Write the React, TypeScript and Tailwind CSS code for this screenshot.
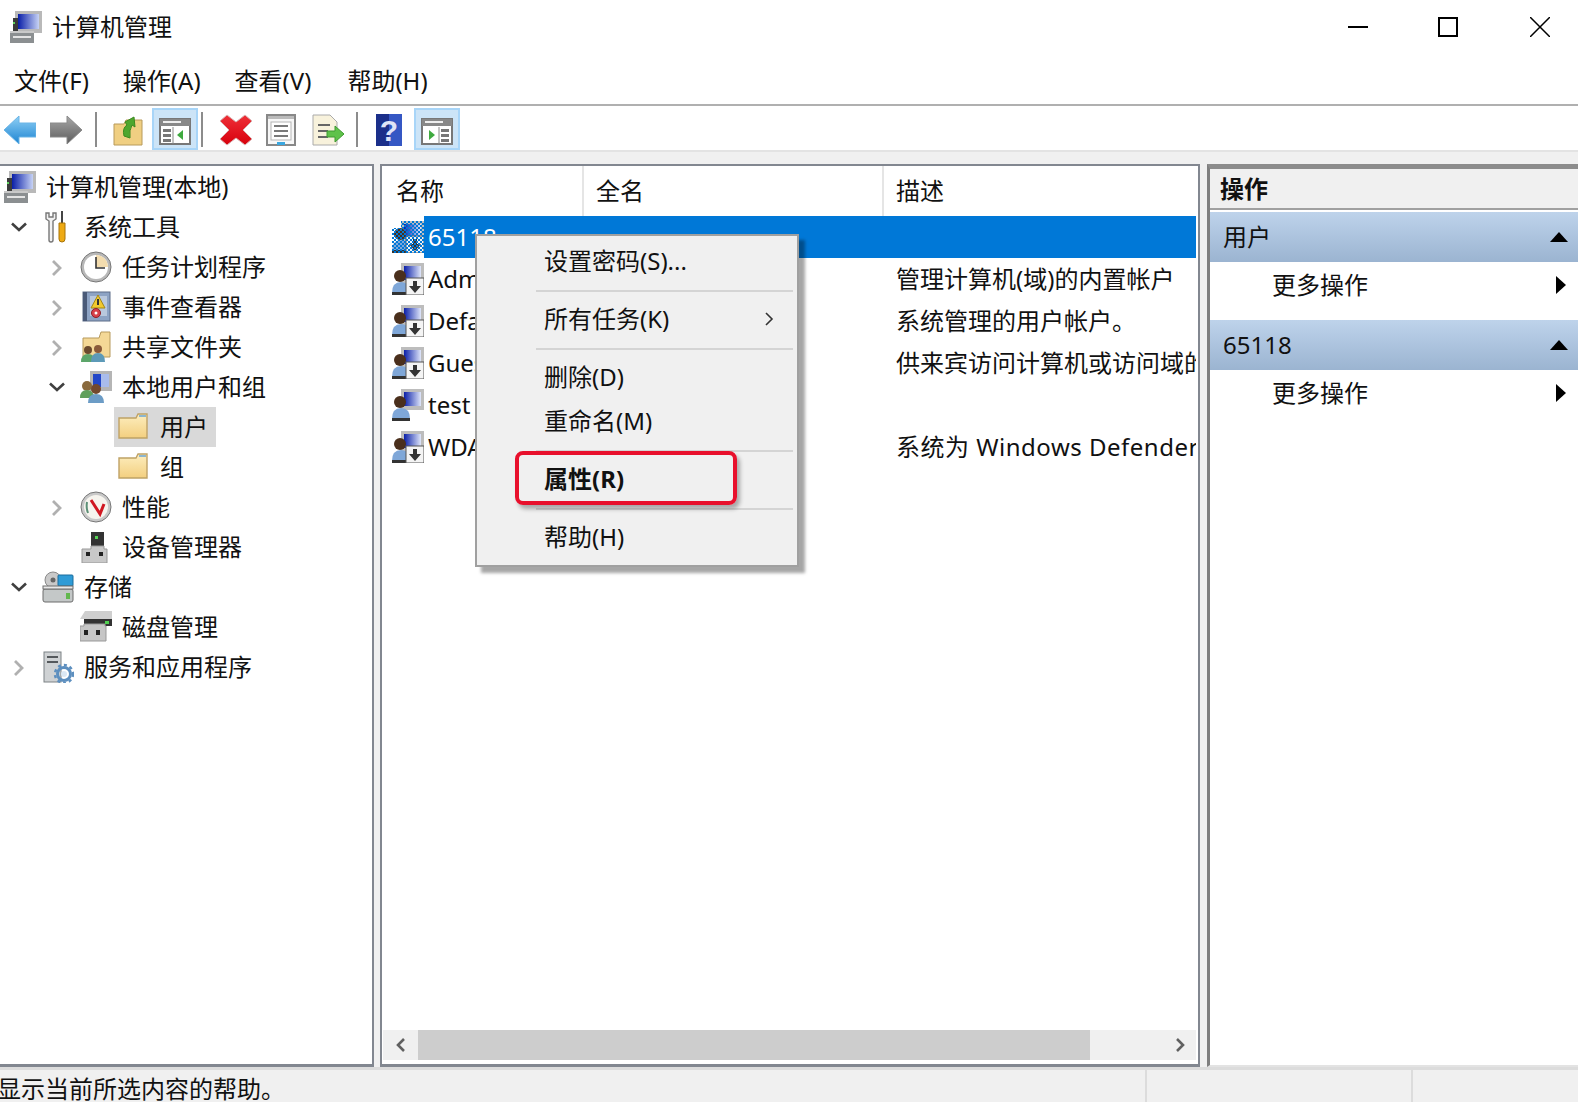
const FONT = '[font-family:"Noto_Sans","Noto_Sans_CJK_SC",sans-serif]';

// 16px Windows-style icons, drawn on a 32 unit grid
function ComputerIcon() {
  return (
    <svg className="w-8 h-8" viewBox="0 0 32 32">
      <defs>
        <linearGradient id="screen" x1="0" x2="1" y1="0" y2="0">
          <stop offset="0" stopColor="#0a1fa8" />
          <stop offset="1" stopColor="#c6d2f5" />
        </linearGradient>
      </defs>
      <rect x="5" y="0" width="27" height="22" fill="#b9b9b9" />
      <rect x="8" y="3" width="21" height="15" fill="url(#screen)" />
      <rect x="3" y="7" width="5" height="13" fill="#3b3b3b" />
      <rect x="3" y="11" width="2" height="2" fill="#5fd35f" />
      <rect x="0" y="20" width="24" height="12" fill="#8b8f91" />
      <rect x="3" y="25" width="18" height="2" fill="#e4e4e4" />
      <rect x="0" y="20" width="24" height="2" fill="#c9c9c9" />
    </svg>
  );
}

function ToolsIcon() {
  return (
    <svg className="w-8 h-8" viewBox="0 0 32 32">
      <path d="M4 2 L4 8 L7 10 L7 29 Q7 31 9 31 Q11 31 11 29 L11 10 L14 8 L14 2 L11 2 L11 6 L7 6 L7 2 Z" fill="#f2f2f2" stroke="#777" strokeWidth="1.4" />
      <rect x="19" y="0" width="2" height="12" fill="#444" />
      <path d="M17 12 H23 V28 Q23 31 20 31 Q17 31 17 28 Z" fill="#eeaa14" stroke="#a87408" />
    </svg>
  );
}

function ClockIcon() {
  return (
    <svg className="w-8 h-8" viewBox="0 0 32 32">
      <circle cx="16" cy="16" r="15" fill="#b8b8b8" stroke="#777" />
      <circle cx="16" cy="16" r="12" fill="#fff" />
      <path d="M16 16 V4 A12 12 0 0 1 28 16 Z" fill="#f3dcae" />
      <path d="M16 6 V17 H25" fill="none" stroke="#333" strokeWidth="1.6" />
    </svg>
  );
}

function EventIcon() {
  return (
    <svg className="w-8 h-8" viewBox="0 0 32 32">
      <rect x="3" y="1" width="27" height="29" fill="#8da3c4" stroke="#5d6d88" />
      <rect x="3" y="1" width="4" height="29" fill="#4a5a78" />
      <rect x="10" y="5" width="17" height="20" fill="#b9c8dd" />
      <path d="M18 4 L25 17 H11 Z" fill="#f2c92d" stroke="#a38716" />
      <rect x="17" y="8" width="2" height="6" fill="#333" />
      <circle cx="16" cy="22" r="4.5" fill="#d8414a" stroke="#8e2028" />
      <circle cx="16" cy="22" r="1.5" fill="#fff" />
    </svg>
  );
}

function FolderIcon({ className = 'w-8 h-8' }: { className?: string }) {
  return (
    <svg className={className} viewBox="0 0 32 32">
      <defs>
        <linearGradient id="folder" x1="0" x2="0" y1="0" y2="1">
          <stop offset="0" stopColor="#fdeebf" />
          <stop offset="1" stopColor="#f3cf7f" />
        </linearGradient>
      </defs>
      <path d="M1 7 L18 7 L20 3 L29 3 L29 27 L1 27 Z" fill="url(#folder)" stroke="#bfa266" strokeWidth="1.4" />
      <rect x="21" y="4" width="7" height="2" fill="#8cb6cf" />
    </svg>
  );
}

function ShareIcon() {
  return (
    <svg className="w-8 h-8" viewBox="0 0 32 32">
      <path d="M3 7 L19 7 L21 1 L30 1 L30 26 L3 26 Z" fill="#f4d896" stroke="#b79a5c" />
      <circle cx="8" cy="19" r="4" fill="#6b4a2e" />
      <path d="M1 31 Q1 23 8 23 Q15 23 15 31 Z" fill="#5ca56a" />
      <circle cx="18" cy="18" r="4" fill="#8a5a3a" />
      <path d="M11 31 Q11 22 18 22 Q25 22 25 31 Z" fill="#5d9ab8" />
    </svg>
  );
}

function UsersIcon() {
  return (
    <svg className="w-8 h-8" viewBox="0 0 32 32">
      <rect x="10" y="0" width="22" height="20" fill="#b5b5b5" />
      <rect x="13" y="3" width="16" height="13" fill="#2246c8" />
      <rect x="21" y="3" width="8" height="13" fill="#a9bcec" />
      <circle cx="7" cy="15" r="5" fill="#8a6a3e" />
      <path d="M0 27 Q0 19 7 19 Q14 19 14 27 Z" fill="#5f9f5c" />
      <circle cx="16" cy="18" r="5" fill="#73492e" />
      <path d="M8 32 Q8 23 16 23 Q24 23 24 32 Z" fill="#6c9cc6" />
    </svg>
  );
}

function PerfIcon() {
  return (
    <svg className="w-8 h-8" viewBox="0 0 32 32">
      <circle cx="16" cy="16" r="15" fill="#c8c8c8" stroke="#777" />
      <circle cx="16" cy="16" r="12" fill="#f6f4ee" />
      <path d="M7 11 Q6 17 8 22" stroke="#5b8f76" strokeWidth="2" fill="none" />
      <path d="M11 9 L20 23 L24 13" stroke="#d01822" strokeWidth="3" fill="none" />
    </svg>
  );
}

function DeviceIcon() {
  return (
    <svg className="w-8 h-8" viewBox="0 0 32 32">
      <rect x="11" y="1" width="13" height="16" fill="#333" />
      <rect x="15" y="5" width="3" height="3" fill="#55d455" />
      <path d="M2 18 H11 V15 H24 V18 H27 V32 H2 Z" fill="#c8c8c8" stroke="#999" />
      <rect x="6" y="21" width="4" height="4" fill="#222" />
      <rect x="19" y="21" width="4" height="4" fill="#222" />
    </svg>
  );
}

function StorageIcon() {
  return (
    <svg className="w-8 h-8" viewBox="0 0 32 32">
      <circle cx="11" cy="9" r="8" fill="#c9c9c9" stroke="#8a8a8a" />
      <circle cx="11" cy="9" r="2.5" fill="#666" />
      <rect x="16" y="4" width="15" height="11" rx="1" fill="#2f9bd6" stroke="#1a6c9c" />
      <rect x="1" y="18" width="30" height="13" rx="2" fill="#c4c8c8" stroke="#6d6d6d" />
      <rect x="24" y="22" width="4" height="6" fill="#62b84e" />
      <rect x="1" y="15" width="30" height="3" fill="#e8e8e8" stroke="#6d6d6d" />
    </svg>
  );
}

function DiskIcon() {
  return (
    <svg className="w-8 h-8" viewBox="0 0 32 32">
      <path d="M5 0 H32 V8 H0 Z" fill="#cfcfcf" />
      <rect x="4" y="8" width="28" height="7" fill="#333" />
      <rect x="25" y="10" width="4" height="3" fill="#50d050" />
      <path d="M0 15 H4 V13 H25 V15 H26 V30 H0 Z" fill="#c6c6c6" stroke="#999" />
      <rect x="4" y="19" width="4" height="5" fill="#222" />
      <rect x="16" y="19" width="4" height="5" fill="#222" />
    </svg>
  );
}

function ServicesIcon() {
  return (
    <svg className="w-8 h-8" viewBox="0 0 32 32">
      <rect x="2" y="1" width="17" height="30" fill="#cfd2d4" stroke="#7c8285" />
      <rect x="5" y="5" width="11" height="2" fill="#55595c" />
      <rect x="5" y="10" width="11" height="2" fill="#55595c" />
      <circle cx="22" cy="23" r="6.5" fill="none" stroke="#5d8fbf" strokeWidth="3" />
      <circle cx="22" cy="23" r="9" fill="none" stroke="#5d8fbf" strokeWidth="2.5" strokeDasharray="3 3" />
      <circle cx="22" cy="23" r="3" fill="#dbe8f4" />
    </svg>
  );
}

function UserIcon({ badge = true, selected = false }: { badge?: boolean; selected?: boolean }) {
  return (
    <svg className="w-8 h-8 shrink-0" viewBox="0 0 32 32">
      <defs>
        <linearGradient id="userscreen" x1="0" x2="1" y1="0" y2="0">
          <stop offset="0" stopColor="#0a1fa8" />
          <stop offset="1" stopColor="#dfe6fa" />
        </linearGradient>
        <pattern id="dither" width="4" height="4" patternUnits="userSpaceOnUse">
          <rect width="2" height="2" fill="#0078d7" />
          <rect x="2" y="2" width="2" height="2" fill="#0078d7" />
        </pattern>
      </defs>
      <rect x="9" y="0" width="23" height="21" fill="#bdbdbd" />
      <rect x="12" y="3" width="17" height="14" fill="url(#userscreen)" />
      <circle cx="8" cy="13" r="6" fill="#4a2f1c" />
      <path d="M0 30 Q0 19 9 19 Q18 19 18 30 Z" fill="#7fa7d8" />
      <rect x="0" y="29" width="18" height="3" fill="#333" />
      {badge && (
        <>
          <rect x="14" y="15" width="18" height="17" fill="#f4f4f4" stroke="#555" />
          <path d="M21 18 H25 V23 H29 L23 30 L17 23 H21 Z" fill="#333" />
        </>
      )}
      {selected && <path d="M9 0 H32 V32 H0 V7 H9 Z" fill="url(#dither)" />}
    </svg>
  );
}

function Chevron({ open }: { open: boolean }) {
  return open ? (
    <svg className="w-4 h-4" viewBox="0 0 16 16"><path d="M1 4.5 L8 11 L15 4.5" fill="none" stroke="#404040" strokeWidth="2.6" /></svg>
  ) : (
    <svg className="w-4 h-[18px] mt-[2px]" viewBox="0 0 16 18"><path d="M4 2 L11 9 L4 16" fill="none" stroke="#b0b0b0" strokeWidth="2.8" /></svg>
  );
}

function BackArrow({ flip, gray }: { flip?: boolean; gray?: boolean }) {
  const id = gray ? 'arrowgray' : 'arrowblue';
  return (
    <svg className="w-8 h-8" viewBox="0 0 32 32">
      <defs>
        <linearGradient id={id} x1="0" x2="0" y1="0" y2="1">
          <stop offset="0" stopColor={gray ? '#a8a8a8' : '#8fd0f5'} />
          <stop offset="1" stopColor={gray ? '#5c5c5c' : '#1d84d2'} />
        </linearGradient>
      </defs>
      <path
        transform={flip ? 'matrix(-1 0 0 1 32 0)' : undefined}
        d="M0 16 L15 2 L15 9 L32 9 L32 23 L15 23 L15 30 Z"
        fill={`url(#${id})`}
        stroke={gray ? '#8a8a8a' : '#6ab4e6'}
      />
    </svg>
  );
}

function UpFolderIcon() {
  return (
    <svg className="w-8 h-8" viewBox="0 0 32 32">
      <path d="M2 10 L12 10 L14 6 L30 6 L30 31 L2 31 Z" fill="#f0cf82" stroke="#b89a5a" />
      <path d="M12 22 Q10 14 15 11 L13 8 L22 3 L23 13 L20 11 Q17 16 18 24 Z" fill="#4fa62e" stroke="#3b8a1f" />
    </svg>
  );
}

function PaneIcon({ side }: { side: 'left' | 'right' }) {
  return (
    <svg className="w-8 h-[27px] mt-[4px]" viewBox="0 0 32 27">
      <rect x="1" y="1" width="30" height="25" fill="#fff" stroke="#777" strokeWidth="2" />
      <rect x="1" y="1" width="30" height="7" fill="#888" />
      <rect x="4" y="3" width="18" height="2" fill="#eee" />
      {side === 'left' ? (
        <>
          <rect x="4" y="11" width="8" height="3" fill="#777" />
          <rect x="4" y="16" width="8" height="3" fill="#777" />
          <rect x="4" y="21" width="8" height="3" fill="#777" />
          <path d="M14 9 V26" stroke="#888" />
          <path d="M24 12 V22 L18 17 Z" fill="#3faa3f" />
        </>
      ) : (
        <>
          <rect x="20" y="11" width="8" height="3" fill="#777" />
          <rect x="20" y="16" width="8" height="3" fill="#777" />
          <rect x="20" y="21" width="8" height="3" fill="#777" />
          <path d="M18 9 V26" stroke="#888" />
          <path d="M8 12 V22 L14 17 Z" fill="#3faa3f" />
        </>
      )}
    </svg>
  );
}

function DeleteIcon() {
  return (
    <svg className="w-8 h-8" viewBox="0 0 32 32">
      <defs>
        <linearGradient id="redx" x1="0" x2="0" y1="0" y2="1">
          <stop offset="0" stopColor="#ee3038" />
          <stop offset="1" stopColor="#d8000c" />
        </linearGradient>
      </defs>
      <path d="M7 1 L16 8 L25 1 L32 7 L23 16 L32 25 L25 31 L16 24 L7 31 L0 25 L9 16 L0 7 Z" fill="url(#redx)" stroke="#d9b0b0" />
    </svg>
  );
}

function PropsIcon() {
  return (
    <svg className="w-[30px] h-8" viewBox="0 0 30 32">
      <rect x="1" y="1" width="28" height="30" fill="#f7f7f7" stroke="#888" strokeWidth="2" />
      <rect x="2" y="2" width="26" height="3" fill="#bbb" />
      <rect x="5" y="8" width="20" height="18" fill="#fff" stroke="#b5b5b5" />
      <rect x="8" y="11" width="14" height="2" fill="#7a7a7a" />
      <rect x="8" y="16" width="14" height="2" fill="#7a7a7a" />
      <rect x="8" y="21" width="14" height="2" fill="#7a7a7a" />
      <rect x="11" y="28" width="8" height="3" fill="#3aa7e0" />
    </svg>
  );
}

function ExportIcon() {
  return (
    <svg className="w-8 h-8" viewBox="0 0 32 32">
      <path d="M1 1 H18 L25 8 V31 H1 Z" fill="#f8f2dc" stroke="#aaa" />
      <rect x="6" y="10" width="12" height="2" fill="#666" />
      <rect x="6" y="16" width="10" height="2" fill="#666" />
      <rect x="6" y="22" width="10" height="2" fill="#666" />
      <path d="M15 17 H23 V12 L32 20 L23 28 V23 H15 Z" fill="#5fc24a" stroke="#3f9a30" />
    </svg>
  );
}

function HelpIcon() {
  return (
    <svg className="w-[26px] h-8" viewBox="0 0 26 32">
      <rect width="26" height="32" fill="#3557c4" />
      <path d="M0 0 H13 V32 H0 Z" fill="#1b2f8a" />
      <text x="13" y="27" textAnchor="middle" fontSize="30" fontWeight="700" fill="#dfe4f6" fontFamily="Liberation Sans, sans-serif">?</text>
    </svg>
  );
}

function Sep() {
  return <div className="w-[2px] h-[35px] bg-[#8c8c8c]" />;
}

type TreeRow = {
  label: string;
  depth: number;
  icon: React.ReactNode;
  state?: 'open' | 'closed';
  selected?: boolean;
};

const TREE: TreeRow[] = [
  { label: '系统工具', depth: 0, icon: <ToolsIcon />, state: 'open' },
  { label: '任务计划程序', depth: 1, icon: <ClockIcon />, state: 'closed' },
  { label: '事件查看器', depth: 1, icon: <EventIcon />, state: 'closed' },
  { label: '共享文件夹', depth: 1, icon: <ShareIcon />, state: 'closed' },
  { label: '本地用户和组', depth: 1, icon: <UsersIcon />, state: 'open' },
  { label: '用户', depth: 2, icon: <FolderIcon />, selected: true },
  { label: '组', depth: 2, icon: <FolderIcon /> },
  { label: '性能', depth: 1, icon: <PerfIcon />, state: 'closed' },
  { label: '设备管理器', depth: 1, icon: <DeviceIcon /> },
  { label: '存储', depth: 0, icon: <StorageIcon />, state: 'open' },
  { label: '磁盘管理', depth: 1, icon: <DiskIcon /> },
  { label: '服务和应用程序', depth: 0, icon: <ServicesIcon />, state: 'closed' },
];

const INDENT = ['w-[38px]', 'w-[76px]', 'w-[114px]'];

const USERS = [
  { name: 'Administrator', desc: '管理计算机(域)的内置帐户' },
  { name: 'DefaultAccount', desc: '系统管理的用户帐户。' },
  { name: 'Guest', desc: '供来宾访问计算机或访问域的内置帐户' },
  { name: 'test', desc: '', plain: true },
  { name: 'WDAGUtilityAccount', desc: '系统为 Windows Defender 应用程序防护方案管理和使用的帐户。', wide: true },
];

function MenuSep() {
  return <div className="h-[2px] my-[6px] ml-[59px] mr-[4px] bg-[#d4d4d4]" />;
}

function MenuItem({ label, bold, arrow }: { label: React.ReactNode; bold?: boolean; arrow?: boolean }) {
  return (
    <div className={`h-[44px] pl-[67px] pr-[22px] pb-[2px] flex items-center justify-between ${bold ? 'font-bold' : ''}`}>
      <span className="whitespace-nowrap">{label}</span>
      {arrow && (
        <svg className="w-3 h-4" viewBox="0 0 12 16"><path d="M3 2 L9 8 L3 14" fill="none" stroke="#333" strokeWidth="1.6" /></svg>
      )}
    </div>
  );
}

function ActionGroup({ title }: { title: string }) {
  return (
    <>
      <div className="h-[50px] pl-[13px] pr-[10px] flex items-center justify-between bg-linear-to-b from-[#bed3eb] to-[#9bb4d1]">
        <span>{title}</span>
        <svg className="w-[18px] h-[10px]" viewBox="0 0 18 10"><path d="M9 0 L18 10 H0 Z" fill="#000" /></svg>
      </div>
      <div className="h-[58px] pl-[62px] pr-[12px] flex items-center justify-between pb-[12px]">
        <span>更多操作</span>
        <svg className="w-[10px] h-[18px]" viewBox="0 0 10 18"><path d="M0 0 L10 9 L0 18 Z" fill="#000" /></svg>
      </div>
    </>
  );
}

export default function App() {
  return (
    <div className={`${FONT} w-[1578px] h-[1102px] overflow-hidden flex flex-col bg-[#f0f0f0] text-[24px] text-[#111]`}>
      {/* Barra de título */}
      <div className="h-[54px] shrink-0 bg-white flex items-center justify-between pl-[10px] pr-[28px]">
        <div className="flex items-center gap-[10px]">
          <ComputerIcon />
          <span>计算机管理</span>
        </div>
        <div className="flex items-center">
          <svg className="w-5 h-5 mr-[70px]" viewBox="0 0 20 20"><rect y="9" width="20" height="2" fill="#000" /></svg>
          <svg className="w-5 h-5 mr-[72px]" viewBox="0 0 20 20"><rect x="1" y="1" width="18" height="18" fill="none" stroke="#000" strokeWidth="2" /></svg>
          <svg className="w-5 h-5" viewBox="0 0 20 20"><path d="M0 0 L20 20 M20 0 L0 20" stroke="#000" strokeWidth="1.5" /></svg>
        </div>
      </div>

      {/* Menu */}
      <div className="h-[50px] shrink-0 bg-white flex items-center pl-[14px] pt-[4px] gap-[34px]">
        <span>文件(F)</span>
        <span>操作(A)</span>
        <span>查看(V)</span>
        <span className="ml-[2px]">帮助(H)</span>
      </div>
      <div className="h-[2px] shrink-0 bg-[#b0b0b0]" />

      {/* Toolbar */}
      <div className="h-[44px] shrink-0 bg-white flex items-end pl-[4px]">
        <div className="mb-[4px]"><BackArrow /></div>
        <div className="ml-[14px] mb-[4px]"><BackArrow flip gray /></div>
        <div className="ml-[13px] mb-[3px]"><Sep /></div>
        <div className="ml-[15px] mb-[4px]"><UpFolderIcon /></div>
        <div className="ml-[8px] w-[46px] h-[42px] flex items-center justify-center bg-[#cce4f7] border-2 border-[#a8d5f8]"><PaneIcon side="left" /></div>
        <div className="ml-[3px] mb-[3px]"><Sep /></div>
        <div className="ml-[17px] mb-[4px]"><DeleteIcon /></div>
        <div className="ml-[14px] mb-[4px]"><PropsIcon /></div>
        <div className="ml-[16px] mb-[4px]"><ExportIcon /></div>
        <div className="ml-[12px] mb-[3px]"><Sep /></div>
        <div className="ml-[18px] mb-[4px]"><HelpIcon /></div>
        <div className="ml-[12px] w-[46px] h-[42px] flex items-center justify-center bg-[#cce4f7] border-2 border-[#a8d5f8]"><PaneIcon side="right" /></div>
      </div>
      <div className="h-[2px] shrink-0 bg-[#e3e3e3]" />

      {/* Painéis */}
      <div className="flex-1 min-h-0 flex pt-[12px]">
        {/* Árvore */}
        <div className="w-[374px] shrink-0 bg-white border-t-2 border-r-2 border-b-[3px] border-[#828790]">
          <div className="h-[41px] flex items-center pl-1">
            <ComputerIcon />
            <span className="ml-[10px]">计算机管理(本地)</span>
          </div>
          {TREE.map((row) => (
            <div key={row.label} className="h-[40px] flex items-center">
              <div className={`${INDENT[row.depth]} shrink-0 flex justify-end`}>
                <div className="w-[38px] flex justify-center">
                  {row.state && <Chevron open={row.state === 'open'} />}
                </div>
              </div>
              <div className={`h-full flex items-center pl-1 pr-2 ${row.selected ? 'bg-[#d9d9d9]' : ''}`}>
                {row.icon}
                <span className="ml-[10px] whitespace-nowrap">{row.label}</span>
              </div>
            </div>
          ))}
        </div>

        {/* Lista */}
        <div className="w-[820px] ml-[6px] shrink-0 bg-white border-2 border-b-[3px] border-[#828790] flex flex-col relative">
          <div className="h-[50px] shrink-0 flex items-center">
            <div className="w-[202px] h-full flex items-center pl-[14px] border-r-2 border-[#e5e5e5]">名称</div>
            <div className="w-[300px] h-full flex items-center pl-[12px] border-r-2 border-[#e5e5e5]">全名</div>
            <div className="pl-[12px]">描述</div>
          </div>
          <div className="flex-1 min-h-0 pr-[2px]">
            <div className="h-[42px] flex items-center pl-[10px]">
              <UserIcon selected />
              <div className="flex-1 h-full flex items-center pl-[4px] bg-[#0078d7] text-white">65118</div>
            </div>
            {USERS.map((u) => (
              <div key={u.name} className="h-[42px] flex items-center pl-[10px]">
                <UserIcon badge={!u.plain} />
                <div className="w-[472px] shrink-0 pl-[4px] whitespace-nowrap">{u.name}</div>
                <div className={`flex-1 min-w-0 overflow-hidden whitespace-nowrap ${u.wide ? 'tracking-[0.5px]' : ''}`}>{u.desc}</div>
              </div>
            ))}
          </div>
          {/* Barra de rolagem */}
          <div className="h-[30px] shrink-0 mb-[4px] ml-[1px] mr-[2px] flex items-center bg-[#f0f0f0]">
            <div className="w-[35px] shrink-0 flex justify-center">
              <svg className="w-[12px] h-4" viewBox="0 0 12 16"><path d="M9 2 L3 8 L9 14" fill="none" stroke="#606060" strokeWidth="2.6" /></svg>
            </div>
            <div className="w-[672px] h-full bg-[#cdcdcd]" />
            <div className="flex-1 flex justify-end pr-[10px]">
              <svg className="w-[12px] h-4" viewBox="0 0 12 16"><path d="M3 2 L9 8 L3 14" fill="none" stroke="#606060" strokeWidth="2.6" /></svg>
            </div>
          </div>

          {/* Menu de contexto */}
          <div className="absolute left-[93px] top-[68px] w-[324px] h-[333px] bg-[#f0f0f0] border-2 border-[#a0a0a0] pt-[4px] shadow-[6px_6px_3px_rgba(0,0,0,0.35)]">
            <MenuItem label="设置密码(S)..." />
            <MenuSep />
            <MenuItem label="所有任务(K)" arrow />
            <MenuSep />
            <MenuItem label="删除(D)" />
            <MenuItem label="重命名(M)" />
            <MenuSep />
            <MenuItem label="属性(R)" bold />
            <MenuSep />
            <MenuItem label="帮助(H)" />
            <div className="absolute left-[38px] top-[215px] w-[222px] h-[54px] rounded-[8px] border-[4px] border-[#e8102c] shadow-[3px_4px_4px_rgba(0,0,0,0.3)]" />
          </div>
        </div>

        {/* Ações */}
        <div className="flex-1 min-w-0 ml-[7px] bg-white border-l-[3px] border-t-[5px] border-b-2 border-l-[#7f7f7f] border-t-[#8c8c8c] border-b-[#e3e3e3]">
          <div className="h-[39px] pl-[10px] flex items-center font-bold bg-[#f0f0f0]">操作</div>
          <div className="h-[2px] bg-[#a0a0a0]" />
          <div className="h-[2px]" />
          <ActionGroup title="用户" />
          <ActionGroup title="65118" />
        </div>
      </div>

      {/* Barra de status */}
      <div className="h-[35px] shrink-0 flex border-t-[3px] border-[#dcdcdc] overflow-hidden">
        <div className="w-[1148px] shrink-0 -ml-[3px] whitespace-nowrap leading-[38px] h-[32px]">显示当前所选内容的帮助。</div>
        <div className="w-[2px] bg-[#dcdcdc]" />
        <div className="w-[264px] shrink-0" />
        <div className="w-[2px] bg-[#dcdcdc]" />
      </div>
    </div>
  );
}
